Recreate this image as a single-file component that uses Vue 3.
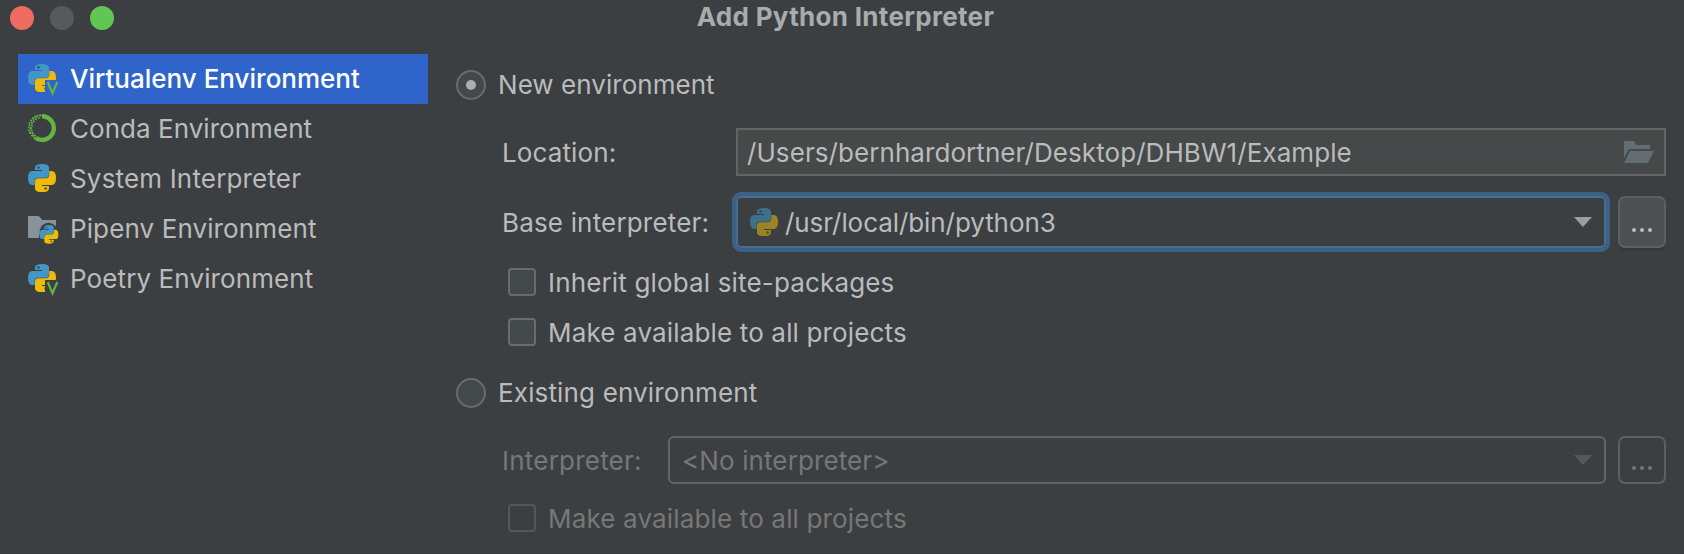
<script setup>
import { h } from 'vue'

const BLUE =
  'M7 6.1V3.6Q7 0 14 0Q21 0 21 3.6V10Q21 13.7 17.4 13.7H10.5Q6.7 13.7 6.7 17.4V21H4.2Q0 21 0 14Q0 7 4.2 7H14V6.1Z'
const EYE = { cx: 10.4, cy: 3.5, r: 1.35 }

function snake(fill, rotated) {
  return h('g', rotated ? { transform: 'rotate(180 14 14)' } : {}, [
    h('path', { d: BLUE, fill }),
    h('circle', { ...EYE, fill: '#3c3f41', 'fill-opacity': 0.8 })
  ])
}
const PythonMark = () => h('g', [snake('#4397c6', false), snake('#edbc0a', true)])

const ringDots = [
  [12.2, 1.4, 1.2], [9.6, 1.7, 1], [10.6, 4, 1], [7.5, 2.8, 1.2], [7.8, 5.2, 1], [5.2, 4.4, 1.2],
  [5.8, 7.2, 1], [3.2, 6.6, 1.1], [4, 9.2, 1.1], [1.4, 8.9, 0.9], [1.7, 11.3, 1.1], [4, 12, 0.9],
  [0.8, 13.6, 0.8], [2.8, 14.2, 1.1], [1.2, 16.2, 1], [3.8, 16.6, 1], [2.2, 18.8, 1.2],
  [4.7, 19.2, 1.1], [4.3, 21.6, 1.2], [6.6, 21.6, 1.2], [6.2, 24, 1]
]

const environments = [
  { name: 'Virtualenv Environment', icon: 'venv', cls: 't-venv', selected: true },
  { name: 'Conda Environment', icon: 'conda', cls: 't-conda' },
  { name: 'System Interpreter', icon: 'python', cls: 't-system' },
  { name: 'Pipenv Environment', icon: 'pipenv', cls: 't-pipenv' },
  { name: 'Poetry Environment', icon: 'venv', cls: 't-poetry' }
]
</script>

<template>
  <div class="dialog">
    <header class="titlebar">
      <div class="lights"><i class="red"></i><i class="grey"></i><i class="green"></i></div>
      <h1>Add Python Interpreter</h1>
    </header>

    <div class="body">
      <nav class="sidebar">
        <div v-for="e in environments" :key="e.name" class="env" :class="{ selected: e.selected }">
          <svg class="icon" width="32" height="32" viewBox="0 0 32 32">
            <template v-if="e.icon === 'venv'">
              <clipPath id="corner"><path d="M0 0H32V16H17V32H0Z" /></clipPath>
              <g clip-path="url(#corner)"><PythonMark /></g>
              <path d="M19.7 18L24.5 29.2L29.3 18" fill="none" stroke="#62b543" stroke-width="2.2" />
            </template>
            <template v-else-if="e.icon === 'conda'">
              <path d="M14 2.2A11.8 11.8 0 1 1 7.6 23.9" fill="none" stroke="#62b543" stroke-width="4.4" />
              <circle v-for="(d, i) in ringDots" :key="i" :cx="d[0]" :cy="d[1]" :r="d[2]" fill="#62b543" />
            </template>
            <PythonMark v-else-if="e.icon === 'python'" />
            <template v-else>
              <path d="M0 2H9.5Q12 2 14 6H28V24H0Z" fill="#87939a" />
              <circle cx="20.5" cy="17.5" r="8.8" fill="#3c3f41" />
              <rect x="11" y="19" width="18" height="9" rx="3" fill="#3c3f41" />
              <g transform="translate(11.6 11) scale(.67)"><PythonMark /></g>
            </template>
          </svg>
          <span :class="e.cls">{{ e.name }}</span>
        </div>
      </nav>

      <main class="form">
        <div class="radio-row">
          <span class="radio checked"></span><span class="t-new">New environment</span>
        </div>

        <div class="row location">
          <label><span class="t-loc">Location:</span></label>
          <div class="input">
            <span class="t-path">/Users/bernhardortner/Desktop/DHBW1/Example</span>
            <svg width="30" height="22" viewBox="0 0 30 22">
              <path d="M0 0H10L12 4H26V8H5L0 17Z" fill="#636d72" />
              <path d="M6.2 10H30L24 22H0Z" fill="#636d72" />
            </svg>
          </div>
        </div>

        <div class="row base">
          <label><span class="t-base">Base interpreter:</span></label>
          <div class="combo focused">
            <svg class="dim" width="28" height="28" viewBox="0 0 28 28"><PythonMark /></svg>
            <span class="t-usr">/usr/local/bin/python3</span>
            <svg class="arrow" width="18" height="10" viewBox="0 0 18 10"><path d="M0 0H18L9 10Z" /></svg>
          </div>
          <button class="more"><i></i><i></i><i></i></button>
        </div>

        <div class="check-row first">
          <span class="check"></span><span class="t-inherit">Inherit global site-packages</span>
        </div>
        <div class="check-row">
          <span class="check"></span><span class="t-make">Make available to all projects</span>
        </div>

        <div class="radio-row existing">
          <span class="radio"></span><span class="t-exist">Existing environment</span>
        </div>

        <div class="row interp disabled">
          <label><span class="t-int">Interpreter:</span></label>
          <div class="combo">
            <span class="t-none">&lt;No interpreter&gt;</span>
            <svg class="arrow" width="18" height="10" viewBox="0 0 18 10"><path d="M0 0H18L9 10Z" /></svg>
          </div>
          <button class="more"><i></i><i></i><i></i></button>
        </div>
        <div class="check-row disabled last">
          <span class="check"></span><span class="t-make">Make available to all projects</span>
        </div>
      </main>
    </div>
  </div>
</template>

<style>
body { background: #3c3f41; overflow: hidden; }
</style>

<style scoped>
* { box-sizing: border-box; }
.dialog {
  width: 1684px; height: 554px; background: #3c3f41; color: #bbbbbb;
  font: 26px/50px Inter, "Liberation Sans", sans-serif; white-space: nowrap;
  border-bottom: 1px solid #353739; overflow: hidden;
}
.titlebar { height: 54px; display: grid; grid-template-columns: 200px 1fr 200px; align-items: start; }
.lights { display: flex; gap: 16px; padding: 6px 0 0 10px; }
.lights i { width: 24px; height: 24px; border-radius: 50%; }
.red { background: #ed6b60; }
.grey { background: #565a5c; }
.green { background: #62c655; }
h1 { margin: 0; font-size: 26px; line-height: 34px; font-weight: 700; letter-spacing: .3px; color: #a9abac; text-align: center; padding-left: 7px; }
.body { display: flex; }
.sidebar { width: 410px; margin-left: 18px; }
.env { height: 50px; display: flex; align-items: center; padding-left: 10px; }
.env.selected { background: #2f65ca; color: #fff; font-weight: 500; }
.icon { margin: 2px 10px 0 0; flex: none; }
.form { width: 1210px; margin-left: 28px; padding-top: 16px; }
.radio-row { height: 30px; display: flex; align-items: center; gap: 12px; }
.radio { width: 30px; height: 30px; border: 2px solid #6b6b6b; border-radius: 50%; background: #43494a; display: grid; place-items: center; }
.radio.checked::after { content: ""; width: 10px; height: 10px; border-radius: 50%; background: #adadad; }
.row { display: flex; align-items: center; padding-left: 46px; }
.row label, .t-path, .t-usr, .t-none, .t-inherit, .t-make { padding-top: 1px; }
.location { height: 48px; margin-top: 28px; }
.location label { width: 234px; }
.input { flex: 1; height: 48px; border: 2px solid #646464; background: #45494a; display: flex; align-items: center; justify-content: space-between; padding: 0 10px 0 9px; }
.base { height: 60px; margin-top: 16px; }
.base label { width: 230px; }
.combo { flex: 1; display: flex; align-items: center; height: 48px; border: 2px solid #646464; border-radius: 6px; padding: 0 12px; }
.combo .arrow { margin-left: auto; fill: #9b9ea1; }
.combo.focused { height: 60px; border: 4px solid #3d6185; border-radius: 9px; box-shadow: inset 0 0 0 2px #466d94; padding: 0 14px; }
.dim { opacity: .55; margin-right: 7px; }
.more { width: 48px; height: 52px; margin: 0 0 0 8px; padding: 0 1px 14px 0; border: 2px solid #5e6060; border-radius: 7px; background: #4c5052; box-shadow: 0 3px 0 #36393a; display: flex; justify-content: center; align-items: flex-end; gap: 4px; }
.more i { width: 4px; height: 4px; border-radius: 50%; background: #bbbbbb; }
.check-row { height: 28px; margin-top: 22px; padding-left: 52px; display: flex; align-items: center; gap: 12px; }
.check-row.first { margin-top: 16px; }
.check { width: 28px; height: 28px; border: 2px solid #6b6b6b; border-radius: 4px; background: #43494a; }
.existing { margin-top: 32px; }
.interp { height: 48px; margin-top: 28px; }
.interp label { width: 166px; }
.disabled { color: #777777; }
.disabled .arrow { fill: #585858; }
.disabled .more { height: 48px; margin-left: 12px; padding-bottom: 12px; background: none; box-shadow: none; }
.disabled .more i { background: #777777; }
.disabled .check { background: none; border-color: #545658; }
.check-row.last { margin-top: 20px; }
.t-conda, .t-new { letter-spacing: .04px; }
.t-system, .t-base { letter-spacing: .17px; }
.t-pipenv, .t-poetry, .t-loc, .t-none { letter-spacing: .11px; }
.t-path { letter-spacing: .07px; }
.t-usr { letter-spacing: -.07px; }
.t-inherit, .t-make, .t-exist { letter-spacing: .155px; }
.t-int { letter-spacing: .22px; }
</style>
